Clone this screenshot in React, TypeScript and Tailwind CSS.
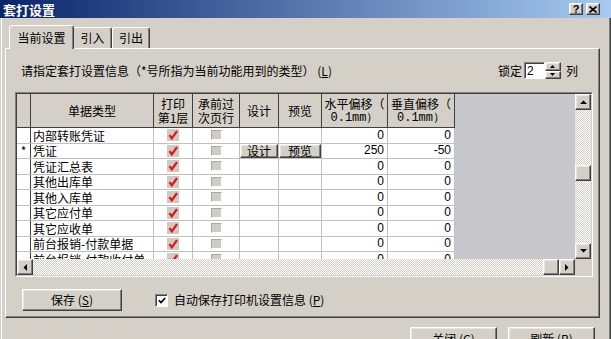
import React from 'react';

interface GridRow {
  name: string;
  h: string;
  v: string;
  mark?: boolean;
  buttons?: boolean;
}

const rows: GridRow[] = [
  { name: '内部转账凭证', h: '0', v: '0' },
  { name: '凭证', h: '250', v: '-50', mark: true, buttons: true },
  { name: '凭证汇总表', h: '0', v: '0' },
  { name: '其他出库单', h: '0', v: '0' },
  { name: '其他入库单', h: '0', v: '0' },
  { name: '其它应付单', h: '0', v: '0' },
  { name: '其它应收单', h: '0', v: '0' },
  { name: '前台报销-付款单据', h: '0', v: '0' },
  { name: '前台报销-付款收付单', h: '0', v: '0' },
];

const raised =
  'border border-t-white border-l-white border-r-[#404040] border-b-[#404040] shadow-[inset_-1px_-1px_#808080,inset_1px_1px_#e8e6e0] bg-[#d4d0c8]';
const dither =
  'bg-[image:repeating-conic-gradient(#d4d0c8_0_25%,#ffffff_0_50%)] bg-[length:2px_2px]';

function Arrow({ dir }: { dir: 'up' | 'down' | 'left' | 'right' }) {
  const pts = {
    up: '0,4 3.5,0.5 7,4',
    down: '0,0 7,0 3.5,3.5',
    left: '4,0 4,7 0.5,3.5',
    right: '0,0 0,7 3.5,3.5',
  }[dir];
  const vertical = dir === 'up' || dir === 'down';
  return (
    <svg width={vertical ? 7 : 4} height={vertical ? 4 : 7} viewBox={vertical ? '0 0 7 4' : '0 0 4 7'}>
      <polygon points={pts} fill="#000" />
    </svg>
  );
}

function ScrollBtn({ dir }: { dir: 'up' | 'down' | 'left' | 'right' }) {
  return (
    <div className={`w-[16px] h-[16px] shrink-0 flex items-center justify-center ${raised}`}>
      <Arrow dir={dir} />
    </div>
  );
}

function RedCheck() {
  return (
    <svg width="12" height="12" viewBox="0 0 12 12">
      <rect x="0" y="0" width="12" height="12" fill="#cfcbc4" />
      <path d="M2.5 6.2 L4.8 9.4 L10 2.2" stroke="#e41414" strokeWidth="2.3" fill="none" />
    </svg>
  );
}

function GreyBox() {
  return (
    <div className="w-[11px] h-[10px] bg-[#d0ccc4] border border-t-[#a8a8a8] border-l-[#a8a8a8] border-r-white border-b-white" />
  );
}

function Row({ r }: { r: GridRow }) {
  return (
    <div className="flex h-[15.5px] shrink-0 border-b border-[#c0c0c0] bg-white text-[12px] leading-[13px]">
      <div className="w-[14px] border-r border-[#404040] flex items-center justify-center">{r.mark ? '*' : ''}</div>
      <div className="w-[123px] border-r border-[#c0c0c0] pl-[2px] flex items-center whitespace-nowrap">
        {r.name}
      </div>
      <div className="w-[39px] border-r border-[#c0c0c0] flex items-center justify-center">
        <RedCheck />
      </div>
      <div className="w-[47px] border-r border-[#c0c0c0] flex items-center justify-center">
        <GreyBox />
      </div>
      <div className="w-[39px] border-r border-[#c0c0c0] flex">
        {r.buttons && <div className={`flex-1 flex items-center justify-center ${raised}`}>设计</div>}
      </div>
      <div className="w-[43px] border-r border-[#c0c0c0] flex">
        {r.buttons && <div className={`flex-1 flex items-center justify-center ${raised}`}>预览</div>}
      </div>
      <div className="w-[66px] border-r border-[#c0c0c0] flex items-center justify-end pr-[3px] font-['Liberation_Sans',sans-serif]">
        {r.h}
      </div>
      <div className="w-[67px] border-r border-[#c0c0c0] flex items-center justify-end pr-[3px] font-['Liberation_Sans',sans-serif]">
        {r.v}
      </div>
    </div>
  );
}

function Header() {
  const cell = 'border-r border-[#404040] flex flex-col items-center justify-center text-center';
  const mm = "font-['Liberation_Mono',monospace] text-[12px] leading-[14px]";
  return (
    <div className="flex h-[34px] shrink-0 border-b border-[#404040] bg-[#d4d0c8] text-[12px] leading-[14px]">
      <div className={`w-[14px] ${cell}`} />
      <div className={`w-[123px] ${cell}`}>单据类型</div>
      <div className={`w-[39px] ${cell}`}>
        <span>打印</span>
        <span>第1层</span>
      </div>
      <div className={`w-[47px] ${cell}`}>
        <span>承前过</span>
        <span>次页行</span>
      </div>
      <div className={`w-[39px] ${cell}`}>设计</div>
      <div className={`w-[43px] ${cell}`}>预览</div>
      <div className={`w-[66px] ${cell}`}>
        <span>水平偏移（</span>
        <span className={mm}>0.1mm）</span>
      </div>
      <div className={`w-[67px] ${cell}`}>
        <span>垂直偏移（</span>
        <span className={mm}>0.1mm）</span>
      </div>
    </div>
  );
}

function Grid() {
  return (
    <div className="ml-[9px] mt-[13px] w-[578px] h-[185px] border border-t-[#808080] border-l-[#808080] border-r-white border-b-white">
      <div className="w-full h-full flex flex-col border border-t-[#404040] border-l-[#404040] border-r-[#d4d0c8] border-b-[#d4d0c8]">
        <div className="flex h-[165px]">
          <div className="w-[438px] flex flex-col overflow-hidden">
            <Header />
            {rows.map((r) => (
              <Row key={r.name} r={r} />
            ))}
          </div>
          <div className="w-[120px] bg-[#c8c7cb]" />
          <div className="w-[16px] flex flex-col">
            <ScrollBtn dir="up" />
            <div className={`h-[55px] ${dither}`} />
            <div className={`h-[16px] ${raised}`} />
            <div className={`flex-1 ${dither}`} />
            <ScrollBtn dir="down" />
          </div>
        </div>
        <div className="flex h-[16px]">
          <div className="w-[558px] flex">
            <ScrollBtn dir="left" />
            <div className={`flex-1 ${dither}`} />
            <div className={`w-[16px] ${raised}`} />
            <ScrollBtn dir="right" />
          </div>
          <div className="w-[16px] bg-[#d4d0c8]" />
        </div>
      </div>
    </div>
  );
}

export default function App() {
  return (
    <div className="w-[611px] h-[339px] overflow-hidden flex flex-col bg-[#d4d0c8] text-black font-['Noto_Sans_CJK_SC',sans-serif] text-[12px]">
      {/* title bar */}
      <div className="h-[18px] shrink-0 flex items-center justify-between pl-[3px] pr-[11px] bg-[linear-gradient(to_right,#0a246a,#a6caf0)]">
        <span className="text-white font-bold text-[13px] leading-none">套打设置</span>
        <div className="flex gap-[3px]">
          <div className={`w-[14px] h-[12px] flex items-center justify-center text-[11px] font-bold leading-none font-['Liberation_Sans',sans-serif] ${raised}`}>
            ?
          </div>
          <div className={`w-[14px] h-[12px] flex items-center justify-center ${raised}`}>
            <svg width="8" height="7" viewBox="0 0 8 7">
              <path d="M0.5 0.5 L7.5 6.5 M7.5 0.5 L0.5 6.5" stroke="#000" strokeWidth="1.6" />
            </svg>
          </div>
        </div>
      </div>

      <div className="flex-1 flex flex-col pl-[5px] pr-[11px] shadow-[inset_1px_0_#d4d0c8,inset_2px_0_#ffffff,inset_-1px_0_#404040,inset_-2px_0_#808080]">
        {/* tabs */}
        <div className="pt-[7px] pl-[4px] flex items-end">
          <div className="relative z-10 -mb-px h-[24px] w-[65px] pt-[5px] flex justify-center bg-[#d4d0c8] border-t border-l border-white border-r border-r-[#404040] rounded-t-[3px] shadow-[inset_-1px_0_#808080] leading-[14px]">
            当前设置
          </div>
          <div className="h-[21px] w-[38px] pt-[3px] flex justify-center border-t border-white border-r border-r-[#404040] rounded-tr-[3px] shadow-[inset_-1px_0_#808080] leading-[14px]">
            引入
          </div>
          <div className="h-[21px] w-[38px] pt-[3px] flex justify-center border-t border-l border-white border-r border-r-[#404040] rounded-t-[3px] shadow-[inset_-1px_0_#808080] leading-[14px]">
            引出
          </div>
        </div>

        {/* tab panel */}
        <div className="w-[595px] h-[270px] shrink-0 flex flex-col border border-t-white border-l-white border-r-[#404040] border-b-[#404040] shadow-[inset_-1px_-1px_#808080]">
          <div className="mt-[13px] h-[17px] pl-[15px] pr-[21px] flex items-center justify-between">
            <span className="whitespace-nowrap">
              请指定套打设置信息（*号所指为当前功能用到的类型） (<u>L</u>)
            </span>
            <div className="flex items-center h-[17px]">
              <span className="mr-[2px]">锁定</span>
              <div className="w-[21px] h-[17px] bg-white border border-t-[#808080] border-l-[#808080] border-r-white border-b-white shadow-[inset_1px_1px_#404040] pl-[2px] flex items-center font-['Liberation_Sans',sans-serif]">
                2
              </div>
              <div className="w-[16px] h-[17px] flex flex-col">
                <div className={`flex-1 flex items-center justify-center ${raised}`}>
                  <svg width="5" height="3" viewBox="0 0 5 3">
                    <polygon points="0,3 2.5,0 5,3" fill="#000" />
                  </svg>
                </div>
                <div className={`flex-1 flex items-center justify-center ${raised}`}>
                  <svg width="5" height="3" viewBox="0 0 5 3">
                    <polygon points="0,0 5,0 2.5,3" fill="#000" />
                  </svg>
                </div>
              </div>
              <span className="ml-[5px]">列</span>
            </div>
          </div>

          <Grid />

          <div className="mt-[12px] h-[22px] pl-[16px] flex items-center">
            <div className={`w-[100px] h-[22px] flex items-center justify-center ${raised}`}>
              保存 (<u>S</u>)
            </div>
            <div className="ml-[33px] w-[13px] h-[13px] bg-white border border-t-[#808080] border-l-[#808080] border-r-white border-b-white shadow-[inset_1px_1px_#404040] flex items-center justify-center">
              <svg width="8" height="7" viewBox="0 0 8 7">
                <path d="M0.8 3.2 L3 5.6 L7.2 1" stroke="#000" strokeWidth="1.7" fill="none" />
              </svg>
            </div>
            <span className="ml-[6px] whitespace-nowrap">
              自动保存打印机设置信息 (<u>P</u>)
            </span>
          </div>
        </div>

        {/* dialog buttons */}
        <div className="mt-[9px] flex justify-end gap-[11px] pr-[5px]">
          <div className={`w-[87px] h-[23px] flex items-center justify-center ${raised}`}>
            关闭 (<u>C</u>)
          </div>
          <div className={`w-[87px] h-[23px] flex items-center justify-center ${raised}`}>
            刷新 (<u>B</u>)
          </div>
        </div>
      </div>
    </div>
  );
}
